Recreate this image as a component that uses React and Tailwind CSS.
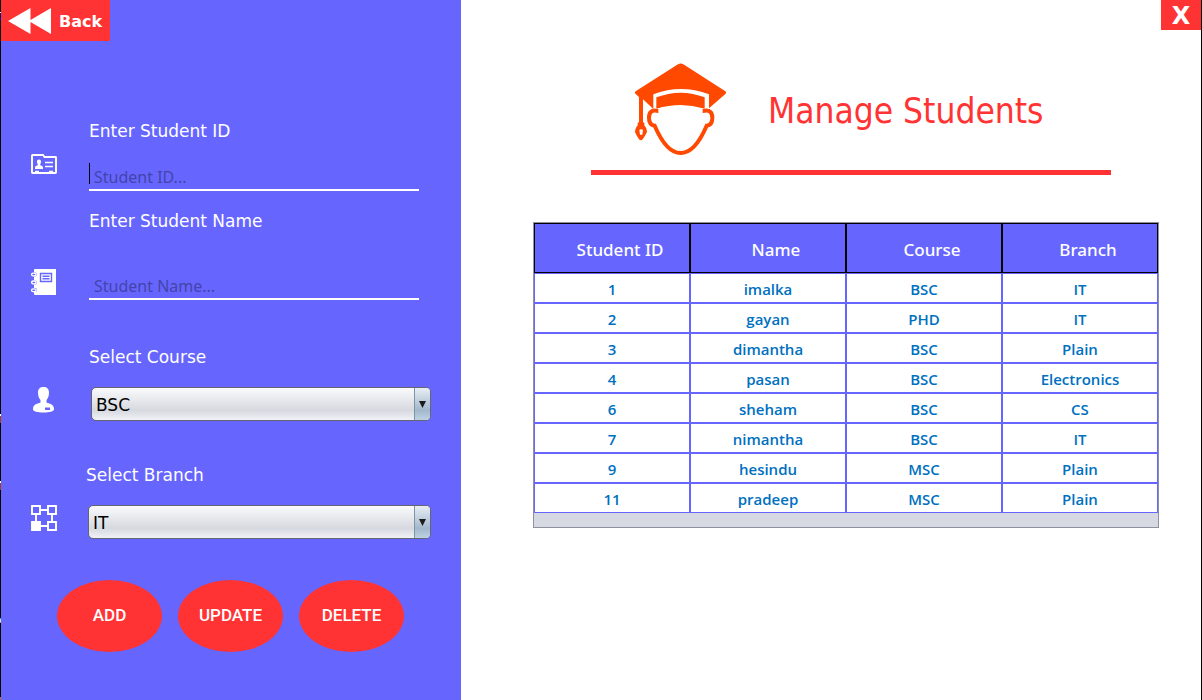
import React from "react";

const students = [
  [1, "imalka", "BSC", "IT"],
  [2, "gayan", "PHD", "IT"],
  [3, "dimantha", "BSC", "Plain"],
  [4, "pasan", "BSC", "Electronics"],
  [6, "sheham", "BSC", "CS"],
  [7, "nimantha", "BSC", "IT"],
  [9, "hesindu", "MSC", "Plain"],
  [11, "pradeep", "MSC", "Plain"],
];

const columns = ["Student ID", "Name", "Course", "Branch"];

function RewindIcon() {
  return (
    <svg width="43" height="26" viewBox="0 0 43 26" fill="white" aria-hidden="true">
      <path d="M0 13 22.500 0v12L43 0v26L22.500 14v12Z" />
    </svg>
  );
}

function IdCardIcon() {
  return (
    <svg width="26" height="26" viewBox="0 0 26 26" fill="none" aria-hidden="true">
      <path d="M1 4.500Q1 4 1.500 4H12l1.500 2H24.500Q25 6 25 6.500V21.500Q25 22 24.500 22H1.500Q1 22 1 21.500Z" stroke="white" strokeWidth="1.900" />
      <path d="M14 11.500h8M14 15.500h8M4 20.500h4M18 20.500h4" stroke="white" strokeWidth="1.500" />
      <path d="M8 8.500c1.600 0 2.200 1.200 2 2.700-.1 1-.6 1.600-.8 2.100v1c1 .4 2.800.8 2.800 2.200v1.500H4v-1.500c0-1.400 1.800-1.800 2.800-2.200v-1C6.600 12.800 6.100 12.200 6 11.200 5.800 9.700 6.400 8.500 8 8.500Z" fill="white" />
    </svg>
  );
}

function NotebookIcon() {
  return (
    <svg width="26" height="26" viewBox="0 0 26 26" fill="none" aria-hidden="true">
      <path d="M3 1Q3 0 4 0H25V26H4Q3 26 3 25V23H4Q6 23 6 21T4 19H3V15.500H4Q6 15.500 6 13.500T4 11.500H3V7.500H4Q6 7.500 6 5.500T4 3.500H3Z" fill="white" />
      <g stroke="white" strokeWidth="1.300">
        <ellipse cx="2.800" cy="5.500" rx="2.300" ry="1.400" />
        <ellipse cx="2.800" cy="13.400" rx="2.300" ry="1.400" />
        <ellipse cx="2.800" cy="21.200" rx="2.300" ry="1.400" />
      </g>
      <path d="M9.500 4.500h11v8h-11ZM11.500 7.300h7M11.500 9.700h7" stroke="#6666ff" strokeWidth="1.400" />
    </svg>
  );
}

function PersonIcon() {
  return (
    <svg width="26" height="26" viewBox="0 0 26 26" aria-hidden="true">
      <path fill="white" d="M12.500 0C16 0 18 2 18 5.500c0 3-.8 5.600-2.500 7.500v2.500c2.500 1.200 7.500 1.600 7.500 6.500 0 2.600-4.500 3.500-10.500 3.500S2 24.600 2 22c0-4.900 5-5.300 7.500-6.500V13C7.800 11.100 7 8.500 7 5.500 7 2 9 0 12.500 0Z" />
      <rect x="14" y="20.500" width="5" height="2.500" fill="#6666ff" />
    </svg>
  );
}

function NodesIcon() {
  return (
    <svg width="26" height="26" viewBox="0 0 26 26" fill="none" stroke="white" strokeWidth="1.900" aria-hidden="true">
      <path d="M1 1h8v8H1ZM17 1h8v8h-8ZM17 17h8v8h-8ZM9 5h8M5 9v8M21 9v8M9 21h8" />
      <path d="M1 17h8v8H1Z" fill="white" />
    </svg>
  );
}

function GraduateIcon() {
  return (
    <svg width="91" height="92" viewBox="45 40 273 276" fill="#ff4800" aria-hidden="true">
      <path d="M174 44Q182 39 190 44L315 124Q321 128 316 133L267 176V134Q225 118 183 118T100 134V178L69 149V217L73 220V227Q81 236 81 245Q81 251 69 267Q63 277 56 267Q45 251 45 245Q45 236 53 227V220L57 217V142L47 133Q42 128 48 124Z" />
      <path fill="white" d="M58 241Q63 236 69 241L67 255H60Z" />
      <path d="M109 143Q145 129 182 129T254 143V177Q218 166 182 166T109 177Z" />
      <path d="M109 178V183Q87 180 87 205Q87 226 104 228C122 270 148 310 182 310C216 310 242 270 260 228Q277 226 277 205Q277 180 254 183V178" fill="none" stroke="#ff4800" strokeWidth="12" />
    </svg>
  );
}

function TextField({ id, label, placeholder, icon, iconClass, gapClass, caret }) {
  return (
    <div className="flex items-end">
      <div className={`w-[58px] shrink-0 ${iconClass}`}>{icon}</div>
      <div className={`flex flex-1 flex-col ${gapClass}`}>
        <label htmlFor={id} className="text-[17px] leading-6 text-white">{label}</label>
        <div className="mr-3 flex h-7 items-start border-b-2 border-white">
          <span className={caret ? "h-[21px] w-px bg-black" : "h-[21px] w-px"} />
          <input
            id={id}
            type="text"
            placeholder={placeholder}
            className="h-7 min-w-0 flex-1 bg-transparent pl-1 font-['Noto_Sans',sans-serif] text-base text-black outline-none placeholder:text-[#4444aa]"
          />
        </div>
      </div>
    </div>
  );
}

function SelectField({ id, label, options, icon, indentClass }) {
  return (
    <div className="flex items-end">
      <div className={`mb-2 shrink-0 ${indentClass}`}>{icon}</div>
      <div className="flex flex-1 flex-col gap-[18px]">
        <label htmlFor={id} className="text-[17px] leading-6 text-white">{label}</label>
        <div className="relative ml-0.5">
          <select
            id={id}
            className="block h-[34px] w-full appearance-none rounded-[5px] border border-[#65656f] bg-linear-to-b from-[#fafafc] via-[#d6d9df] via-70% to-[#f0f2f6] pt-1 pl-1 text-[17px] text-black outline-none"
          >
            {options.map((o) => (
              <option key={o}>{o}</option>
            ))}
          </select>
          <span className="pointer-events-none absolute inset-y-px right-px flex w-4 items-center justify-center rounded-r-[4px] border-l border-[#7d95a8] bg-linear-to-b from-[#e8eef4] via-[#a3b8cb] via-70% to-[#bdd2e2]">
            <svg width="7" height="7" viewBox="0 0 7 7" aria-hidden="true">
              <path d="M0 0h7L3.500 7Z" fill="#1c1c1c" />
            </svg>
          </span>
        </div>
      </div>
    </div>
  );
}

export default function App() {
  return (
    <div className="flex min-h-screen border-r border-black bg-white font-['DejaVu_Sans',sans-serif]">
      <div className="w-px shrink-0 bg-black bg-[linear-gradient(#000_12px,#fff_12px,#fff_13px,#000080_13px,#000080_21px,#000_21px,#000_414px,#fff_414px,#fff_416px,#a04010_416px,#a04010_423px,#000_423px,#000_481px,#fff_481px,#fff_483px,#a04010_483px,#a04010_490px,#000_490px,#000_618px,#39c_618px,#fff_621px,#a64_623px,#000_623px,#000_697px,#b63_697px)]" />
      <aside className="w-[460px] shrink-0 bg-[#6666ff]">
        <button type="button" className="flex h-[41px] w-[109px] items-center gap-2 bg-[#ff3333] pl-[7px] text-base font-bold text-white">
          <RewindIcon />
          <span className="pt-[3px]">Back</span>
        </button>

        <form className="flex flex-col pt-[78px] pr-[30px] pl-[30px]" onSubmit={(e) => e.preventDefault()}>
          <TextField id="student-id" label="Enter Student ID" placeholder="Student ID..." icon={<IdCardIcon />} iconClass="mb-3.5" gapClass="gap-5" caret />
          <div className="mt-[18px]">
            <TextField id="student-name" label="Enter Student Name" placeholder="Student Name..." icon={<NotebookIcon />} iconClass="mb-[5px]" gapClass="gap-[39px]" />
          </div>
          <div className="mt-[45px]">
            <SelectField id="course" label="Select Course" options={["BSC", "MSC", "PHD"]} icon={<PersonIcon />} indentClass="w-[58px]" />
          </div>
          <div className="mt-[42px]">
            <SelectField id="branch" label="Select Branch" options={["IT", "CS", "Plain", "Electronics"]} icon={<NodesIcon />} indentClass="w-[55px]" />
          </div>
          <div className="mt-[41px] flex gap-4 pl-[26px]">
            {["ADD", "UPDATE", "DELETE"].map((name) => (
              <button key={name} type="button" className="h-[72px] w-[105px] rounded-[50%] bg-[#ff3333] font-[Roboto,sans-serif] text-[17px] font-medium text-white">
                {name}
              </button>
            ))}
          </div>
        </form>
      </aside>

      <main className="flex min-w-0 flex-1 flex-col">
        <button type="button" aria-label="Close" className="h-[30px] w-10 self-end bg-[#ff3333] text-2xl leading-8 font-bold text-white">
          X
        </button>
        <header className="mr-[90px] ml-[130px] flex items-center gap-[42px] border-b-5 border-[#ff3333] pt-[33px] pb-[15px] pl-11">
          <GraduateIcon />
          <h1 className="pt-1 font-['DejaVu_Sans_Condensed','Noto_Sans',sans-serif] text-[35px] leading-10 whitespace-nowrap text-[#ff3333]">Manage Students</h1>
        </header>
        <div className="mt-[47px] mr-[42px] ml-[72px] border border-[#8f91a0] bg-[#d6d9e2] pb-3.5">
          <table className="w-full table-fixed border-separate border-spacing-0 font-['Noto_Sans',sans-serif]">
            <thead>
              <tr>
                {columns.map((c) => (
                  <th key={c} scope="col" className="h-[50px] border border-black bg-[#6666ff] p-0 pt-1 pl-4 text-center text-[17px] font-medium text-white">
                    {c}
                  </th>
                ))}
              </tr>
            </thead>
            <tbody className="font-['Open_Sans',sans-serif] font-semibold">
              {students.map((row) => (
                <tr key={row[0]}>
                  {row.map((cell, i) => (
                    <td key={i} className="h-[30px] border border-[#6666ff] bg-white p-0 pt-0.5 text-center text-[15px] leading-5 text-[#0070c0]">
                      {cell}
                    </td>
                  ))}
                </tr>
              ))}
            </tbody>
          </table>
        </div>
      </main>
    </div>
  );
}
